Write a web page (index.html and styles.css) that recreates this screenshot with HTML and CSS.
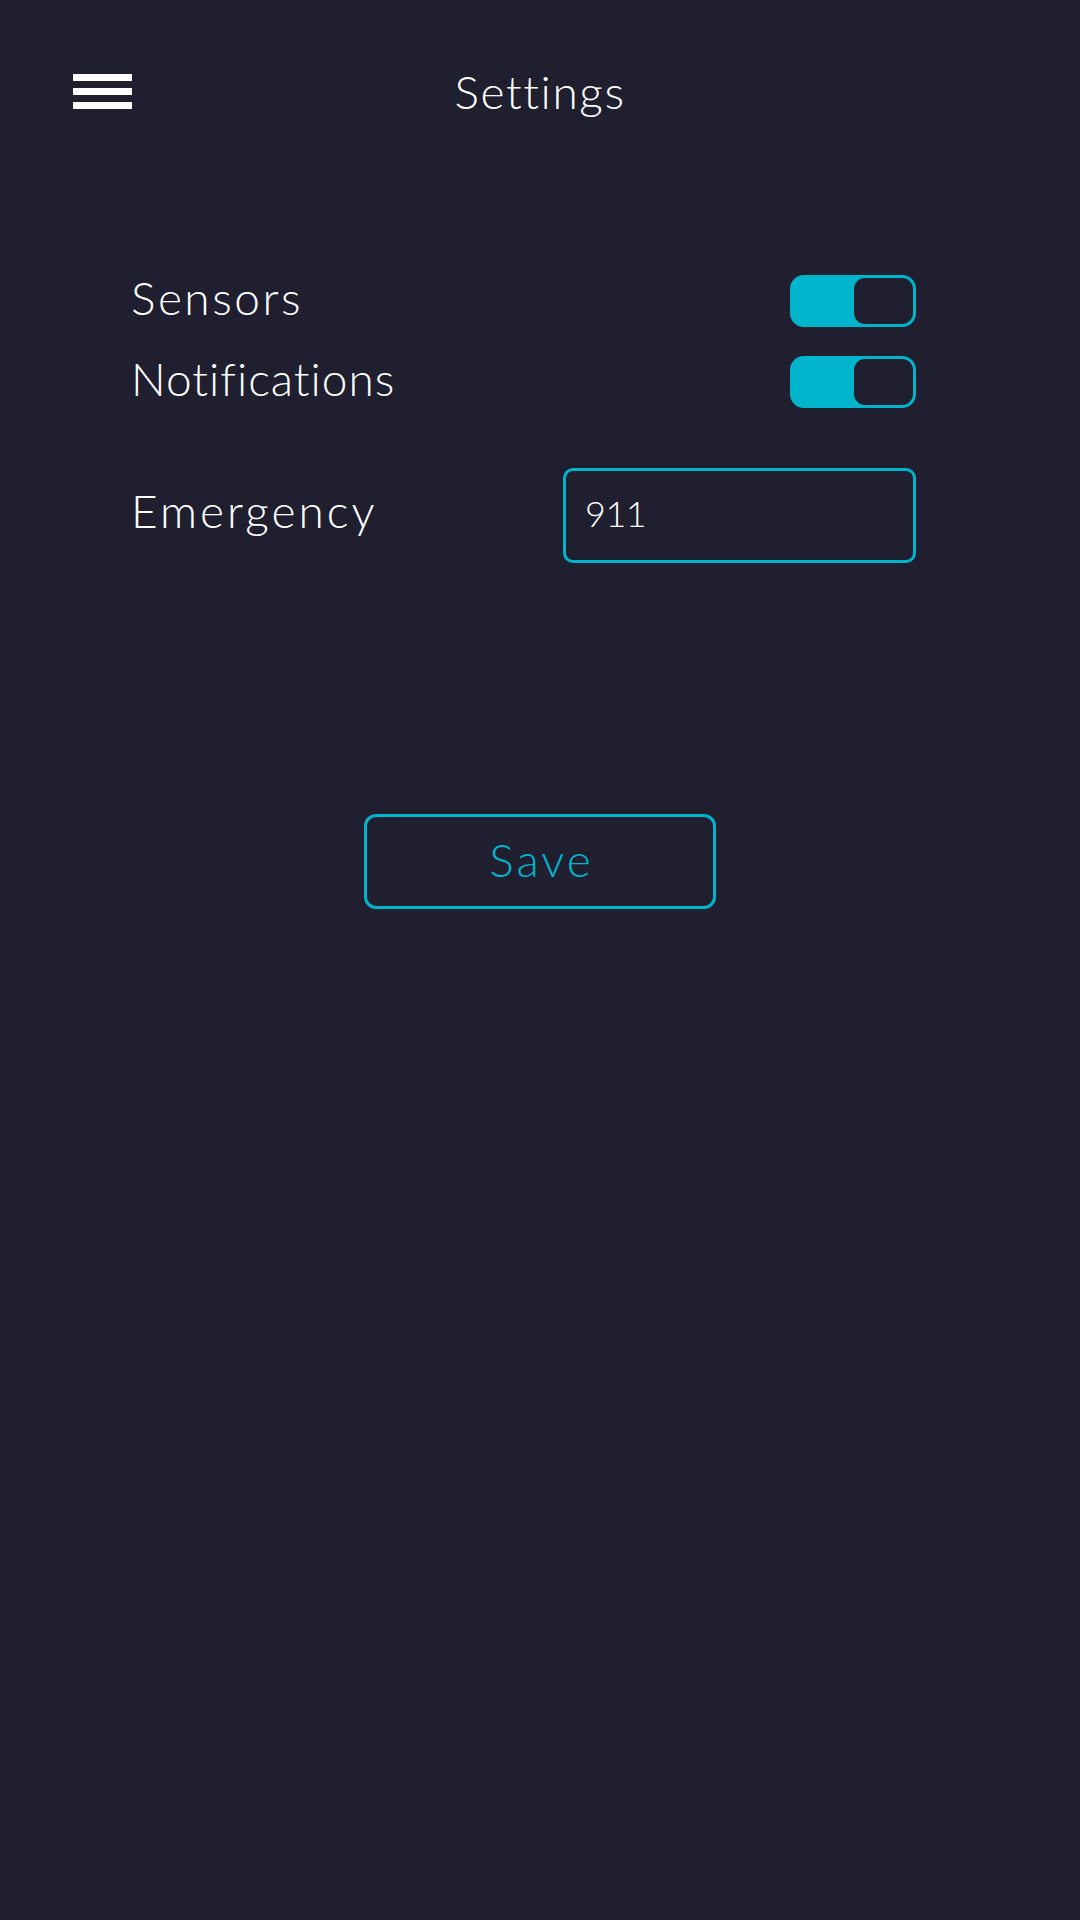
FILE: index.html
```html
<!DOCTYPE html>
<html>
<head>
<meta charset="utf-8">
<link rel="stylesheet" href="styles.css">
</head>
<body>
<div class="app">
  <header class="header">
    <div class="menu" aria-label="Menu">
      <span class="bar"></span><span class="bar"></span><span class="bar"></span>
    </div>
    <h1 class="title">Settings</h1>
    <div class="spacer"></div>
  </header>
  <main class="settings">
    <div class="row toggle-row">
      <span class="label label-wide">Sensors</span>
      <div class="toggle on"><span class="knob"></span></div>
    </div>
    <div class="row toggle-row">
      <span class="label label-tight">Notifications</span>
      <div class="toggle on"><span class="knob"></span></div>
    </div>
    <div class="row input-row">
      <span class="label label-wider">Emergency</span>
      <input class="field" type="text" value="911">
    </div>
    <div class="actions">
      <button class="save">Save</button>
    </div>
  </main>
</div>
</body>
</html>
```
FILE: styles.css
```css
html, body {
  margin: 0;
  padding: 0;
  background: #1f1f30;
}
body {
  width: 1080px;
  height: 1920px;
  font-family: "Lato", "Open Sans", sans-serif;
  font-weight: 300;
  color: #ffffff;
}
.header {
  display: grid;
  grid-template-columns: 1fr auto 1fr;
  align-items: center;
  padding: 67px 73px 0 73px;
  height: 47px;
}
.menu {
  display: flex;
  flex-direction: column;
  gap: 7px;
  width: 59px;
  margin-top: 2px;
}
.bar {
  display: block;
  height: 7px;
  background: #ffffff;
}
.title {
  margin: 0;
  padding-top: 2px;
  font-size: 46px;
  font-weight: 300;
  line-height: 44px;
  letter-spacing: 1.6px;
}
.settings {
  display: flex;
  flex-direction: column;
  padding: 161px 164px 0 131px;
}
.row {
  display: flex;
  align-items: center;
  justify-content: space-between;
}
.toggle-row {
  height: 52px;
}
.toggle-row + .toggle-row {
  margin-top: 29px;
}
.label {
  font-size: 46px;
  letter-spacing: 2px;
  line-height: 52px;
  padding-bottom: 6px;
}
.label-wide {
  letter-spacing: 2.5px;
}
.label-tight {
  letter-spacing: 1px;
}
.label-wider {
  letter-spacing: 3px;
}
.input-row .label {
  padding-bottom: 10px;
}
.toggle {
  box-sizing: border-box;
  width: 126px;
  height: 52px;
  border: 3px solid #00b5cc;
  border-radius: 14px;
  background: #00b5cc;
  display: flex;
  justify-content: flex-end;
}
.knob {
  width: 59px;
  height: 100%;
  background: #1f1f30;
  border-radius: 11px;
}
.input-row {
  margin-top: 60px;
  height: 95px;
}
.field {
  box-sizing: border-box;
  width: 353px;
  height: 95px;
  border: 3px solid #00b5cc;
  border-radius: 10px;
  background: transparent;
  color: #ffffff;
  font-family: "Lato", "Open Sans", sans-serif;
  font-weight: 300;
  font-size: 36px;
  letter-spacing: -0.5px;
  padding: 0 0 6px 19px;
  outline: none;
}
.actions {
  display: flex;
  justify-content: center;
  margin-top: 251px;
  margin-left: -131px;
  margin-right: -164px;
}
.save {
  box-sizing: border-box;
  width: 352px;
  height: 95px;
  border: 3px solid #00b5cc;
  border-radius: 12px;
  background: transparent;
  color: #00b5cc;
  font-family: "Lato", "Open Sans", sans-serif;
  font-weight: 300;
  font-size: 46px;
  letter-spacing: 3px;
  padding: 0 0 4px 3px;
}
```
